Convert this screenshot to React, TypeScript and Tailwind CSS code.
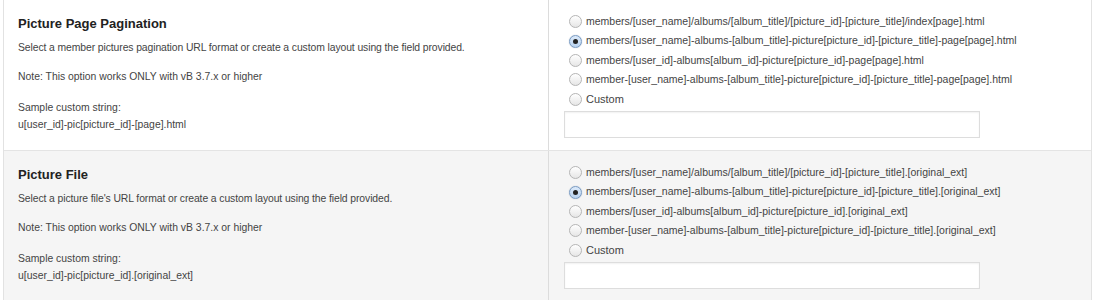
import React from "react";

type Setting = {
  title: string;
  description: string;
  sample: string;
  options: string[];
  selected: number;
  shade: boolean;
};

const settings: Setting[] = [
  {
    title: "Picture Page Pagination",
    description:
      "Select a member pictures pagination URL format or create a custom layout using the field provided.",
    sample: "u[user_id]-pic[picture_id]-[page].html",
    options: [
      "members/[user_name]/albums/[album_title]/[picture_id]-[picture_title]/index[page].html",
      "members/[user_name]-albums-[album_title]-picture[picture_id]-[picture_title]-page[page].html",
      "members/[user_id]-albums[album_id]-picture[picture_id]-page[page].html",
      "member-[user_name]-albums-[album_title]-picture[picture_id]-[picture_title]-page[page].html",
      "Custom",
    ],
    selected: 1,
    shade: false,
  },
  {
    title: "Picture File",
    description:
      "Select a picture file's URL format or create a custom layout using the field provided.",
    sample: "u[user_id]-pic[picture_id].[original_ext]",
    options: [
      "members/[user_name]/albums/[album_title]/[picture_id]-[picture_title].[original_ext]",
      "members/[user_name]-albums-[album_title]-picture[picture_id]-[picture_title].[original_ext]",
      "members/[user_id]-albums[album_id]-picture[picture_id].[original_ext]",
      "member-[user_name]-albums-[album_title]-picture[picture_id]-[picture_title].[original_ext]",
      "Custom",
    ],
    selected: 1,
    shade: true,
  },
];

function Radio({ checked }: { checked: boolean }) {
  if (checked) {
    return (
      <span className="flex h-[13px] w-[13px] shrink-0 items-center justify-center rounded-full border border-[#7a9cc4] bg-gradient-to-b from-[#dceafa] to-[#b9d3f0] shadow-[0_0_1px_#9ab]">
        <span className="h-[5px] w-[5px] rounded-full bg-[#222]" />
      </span>
    );
  }
  return (
    <span className="h-[13px] w-[13px] shrink-0 rounded-full border border-[#b5b5b5] bg-gradient-to-b from-[#ffffff] to-[#e6e6e6]" />
  );
}

function SettingRow({ s }: { s: Setting }) {
  return (
    <div
      className={`grid grid-cols-[545px_1fr] border-b border-[#e4e4e4] ${
        s.shade ? "bg-[#f5f5f5]" : "bg-white"
      }`}
    >
      <div className="h-[150px] border-r border-[#dcdcdc] pl-[14px] pt-[16px] text-[#444]">
        <h3 className="text-[13px] font-bold leading-[16px] text-[#222]">
          {s.title}
        </h3>
        <p className="mt-[9px] text-[10.4px] leading-[14px] tracking-[-0.1px]">
          {s.description}
        </p>
        <p className="mt-[15px] text-[10.4px] leading-[14px]">
          Note: This option works ONLY with vB 3.7.x or higher
        </p>
        <p className="mt-[15px] text-[10.4px] leading-[17px]">
          Sample custom string:
          <br />
          {s.sample}
        </p>
      </div>
      <div className="pl-[15px] pt-[12px] text-[10.5px] text-[#444]">
        {s.options.map((o, i) => (
          <label
            key={o}
            className="flex h-[19.4px] items-center gap-[4px] pl-[5px]"
          >
            <Radio checked={i === s.selected} />
            <span className={o === "Custom" ? "text-[11px]" : ""}>{o}</span>
          </label>
        ))}
        <input
          type="text"
          className="mt-[2px] block h-[27px] w-[416px] border border-[#ddd] bg-white shadow-[inset_0_1px_2px_rgba(0,0,0,0.06)] outline-none"
        />
      </div>
    </div>
  );
}

export default function App() {
  return (
    <div className="min-h-[300px] bg-white font-['Liberation_Sans',Arial,sans-serif]">
      <div className="ml-[3px] w-[1089px] border-x border-[#e2e2e2]">
        {settings.map((s) => (
          <SettingRow key={s.title} s={s} />
        ))}
      </div>
    </div>
  );
}
